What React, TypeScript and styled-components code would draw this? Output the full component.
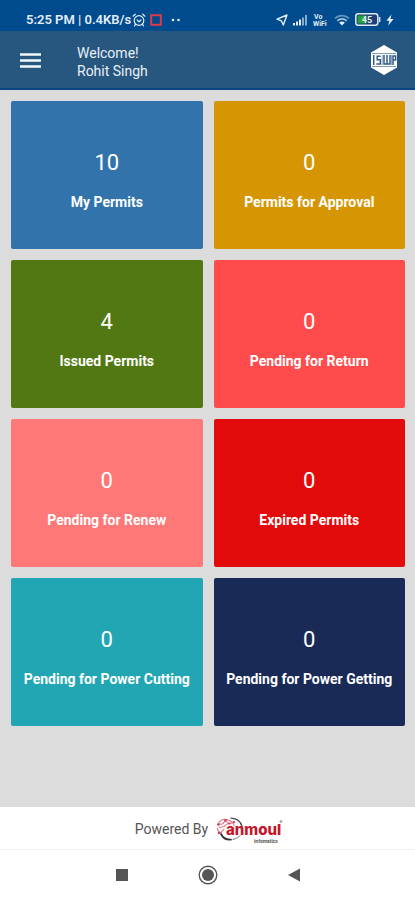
import React from "react";
import styled, { createGlobalStyle } from "styled-components";

const GlobalStyle = createGlobalStyle`
  *, *::before, *::after { box-sizing: border-box; }
  body {
    margin: 0;
    font-family: Roboto, "Liberation Sans", sans-serif;
    background: #dcdcdc;
  }
  svg { display: block; flex: none; }
`;

const Screen = styled.div`
  display: flex;
  flex-direction: column;
  min-height: 100vh;
`;

const StatusBar = styled.div`
  display: flex;
  align-items: center;
  justify-content: space-between;
  height: 31px;
  padding: 8px 21px 0 26px;
  background: #004b8d;
  color: #e3edf8;
`;

const StatusGroup = styled.div<{ $gap: number }>`
  display: flex;
  align-items: center;
  gap: ${({ $gap }) => $gap}px;
`;

const StatusText = styled.span`
  font-size: 13px;
  font-weight: 600;
  line-height: 16px;
  white-space: nowrap;
`;

const Header = styled.header`
  display: flex;
  align-items: center;
  height: 59px;
  padding: 0 17px 0 18px;
  background: #27567f;
  border-bottom: 2px solid #0a4482;
  color: #e8f0f8;
`;

const MenuButton = styled.button`
  display: flex;
  padding: 0;
  border: 0;
  background: none;
  color: #f2f7fc;
  cursor: pointer;
`;

const Greeting = styled.div`
  flex: 1;
  margin-left: 35px;
  padding-top: 4px;
  font-size: 14px;
  line-height: 18px;
`;

const Main = styled.main`
  flex: 1;
  padding: 11px 10px 11px 11px;
`;

const CardGrid = styled.div`
  display: grid;
  grid-template-columns: repeat(2, minmax(0, 1fr));
  grid-auto-rows: 148px;
  gap: 11px;
`;

const Card = styled.button<{ $color: string }>`
  display: flex;
  flex-direction: column;
  align-items: center;
  justify-content: center;
  gap: 16px;
  padding: 12px 4px 0;
  border: 0;
  border-radius: 2px;
  background: ${({ $color }) => $color};
  color: #fff;
  font-family: inherit;
  cursor: pointer;
`;

const Count = styled.span`
  font-size: 22px;
  line-height: 26px;
`;

const CardLabel = styled.span`
  font-size: 14px;
  font-weight: 700;
  line-height: 20px;
`;

const Footer = styled.footer`
  display: flex;
  align-items: center;
  justify-content: center;
  gap: 8px;
  height: 43px;
  padding: 2px 0 0 3px;
  border-bottom: 1px solid #f3f3f3;
  background: #fff;
  color: #555;
  font-size: 14px;
`;

const NavBar = styled.nav`
  display: flex;
  align-items: center;
  justify-content: center;
  gap: 70px;
  height: 50px;
  background: #fff;
  color: #555;
`;

const NavButton = styled.button`
  display: flex;
  padding: 0;
  border: 0;
  background: none;
  color: inherit;
  cursor: pointer;
`;

const cards = [
  { label: "My Permits", count: 10, color: "#3273ab" },
  { label: "Permits for Approval", count: 0, color: "#d69604" },
  { label: "Issued Permits", count: 4, color: "#517812" },
  { label: "Pending for Return", count: 0, color: "#ff4b4b" },
  { label: "Pending for Renew", count: 0, color: "#ff7878" },
  { label: "Expired Permits", count: 0, color: "#e20a0a" },
  { label: "Pending for Power Cutting", count: 0, color: "#23a6b3" },
  { label: "Pending for Power Getting", count: 0, color: "#1a2a56" },
];

const AlarmIcon = () => (
  <svg width="14" height="14" viewBox="0 0 14 14" fill="none" stroke="currentColor" strokeWidth="1.2" strokeLinecap="round">
    <circle cx="7" cy="7.5" r="4.8" />
    <path d="M1 3.2 3.3 1.2M13 3.2 10.7 1.2M5.2 7l1.8 1.8L9 7M3.6 11.2 2.5 12.8M10.4 11.2l1.1 1.6" />
  </svg>
);

const RecordIcon = () => (
  <svg width="18" height="12" viewBox="0 0 18 12" fill="none" stroke="#dc3a48">
    <rect x="4.2" y="1.2" width="9.6" height="9.6" strokeWidth="2" />
  </svg>
);

const DotsIcon = () => (
  <svg width="16" height="4" viewBox="0 0 16 4" fill="currentColor">
    <circle cx="7" cy="2" r="1.3" />
    <circle cx="12.5" cy="2" r="1.3" />
  </svg>
);

const LocationIcon = () => (
  <svg width="12" height="12" viewBox="0 0 12 12" fill="none" stroke="currentColor" strokeWidth="1.4" strokeLinejoin="round">
    <path d="M11 1 7.3 11 5.4 6.8 1 5.2Z" />
  </svg>
);

const SignalIcon = () => (
  <svg width="15" height="12" viewBox="0 0 15 12" fill="currentColor">
    <path d="M0 9h2v2.5H0zM3 7.5h2v4H3zM6 5.5h2v6H6z" />
    <path d="M9 3.5h2v8H9zM12 1h2v10.5h-2z" opacity=".6" />
  </svg>
);

const VoWifiIcon = () => (
  <svg width="16" height="14" viewBox="0 0 16 14" fill="currentColor" fontFamily="Roboto, sans-serif" fontWeight="700" fontSize="7">
    <text x="1" y="6">Vo</text>
    <text x="0" y="13">WiFi</text>
  </svg>
);

const WifiIcon = () => (
  <svg width="16" height="12" viewBox="0 0 16 12" fill="none" stroke="currentColor" strokeWidth="1.7">
    <path d="M1 4.4a10 10 0 0 1 14 0" opacity=".45" />
    <path d="M3.3 6.9a6.6 6.6 0 0 1 9.4 0" opacity=".7" />
    <path d="M8 11.6 5.2 8.8a4 4 0 0 1 5.6 0Z" fill="currentColor" stroke="none" />
  </svg>
);

const BatteryIcon = () => (
  <svg width="26" height="13" viewBox="0 0 26 13">
    <rect x=".8" y=".8" width="22" height="11.4" rx="2.5" fill="#1d3f79" stroke="#dfe9f4" strokeWidth="1.5" />
    <rect x="2.5" y="2.5" width="9" height="8" fill="#22a03c" />
    <path d="M24 4h1.4v5H24z" fill="#dfe9f4" />
    <text x="12" y="10" textAnchor="middle" fontFamily="Roboto, sans-serif" fontSize="9" fontWeight="700" fill="#e6f2ee">45</text>
  </svg>
);

const BoltIcon = () => (
  <svg width="8" height="12" viewBox="0 0 8 12" fill="currentColor">
    <path d="M5.4.5.4 6.8h2.9L2.2 11.5 7.6 5H4.5Z" />
  </svg>
);

const MenuIcon = () => (
  <svg width="24" height="24" viewBox="0 0 24 24" stroke="currentColor" strokeWidth="2.4">
    <path d="M2 6.5h21M2 12.5h21M2 18.5h21" />
  </svg>
);

const IswpLogo = () => (
  <svg width="28" height="32" viewBox="0 0 28 32" role="img" aria-label="ISWP">
    <path d="M14 1 27 8.5v15L14 31 1 23.5v-15Z" fill="#fff" />
    <path d="M2 9.5h24M2 22.5h24" stroke="#7d9ab6" strokeWidth="1" />
    <g fill="none" stroke="#2f5d88" strokeWidth="1.5">
      <path d="M3.7 11v10M10.6 12.2H7.2v3.5h3.2v4.4H6.3M14 11v9h3v-9M17 20h3v-9M23 21V12h2.6v4H23" />
    </g>
    <path d="M12.2 11v10M21.5 11v10" stroke="#91a9c1" strokeWidth="1" />
  </svg>
);

const AnmoulLogo = () => (
  <svg width="67" height="30" viewBox="0 0 67 30" role="img" aria-label="anmoul infomatics">
    <g fill="none" strokeLinecap="round">
      <path d="M15 4.2C21 4.7 25 8 26 12.5" stroke="#4a4a4a" strokeWidth="1.3" />
      <path d="M5 20c2 4.2 5.5 6 10 5.6" stroke="#333" strokeWidth="1.8" />
      <path d="M17 25.4c3.6-.7 6-2.4 7.2-4" stroke="#777" strokeWidth="1" />
      <path d="M2 10.5C4 6 8 4.2 13 6.2c3 1.2 4.6 3.4 5 5.2M2 10.5l5-.8 2.6-3.2 3.2 3.6L18 8M3 13.5l5-1 3-2.4M1.5 14.5c0 2.4 1.6 3.6 3.5 4.2L8 15" stroke="#dd7182" strokeWidth="1.1" />
    </g>
    <g fill="#d33a50">
      <circle cx="2.4" cy="10.5" r="1.3" /><circle cx="9.5" cy="6.2" r="1.2" /><circle cx="13" cy="9.5" r="1" />
      <circle cx="3" cy="19" r="1.2" /><circle cx="18" cy="8" r="1.1" />
    </g>
    <text x="10" y="21" fontFamily="Inter, sans-serif" fontSize="15" fontWeight="800" fill="#c5162b">anmoul</text>
    <text x="38" y="29" fontFamily="Roboto, sans-serif" fontSize="5" fontWeight="700" fill="#555">infomatics</text>
    <circle cx="65" cy="7.5" r="1" fill="none" stroke="#666" strokeWidth=".7" />
  </svg>
);

const SquareIcon = () => (
  <svg width="12" height="12" viewBox="0 0 12 12"><rect width="12" height="12" fill="currentColor" /></svg>
);

const HomeIcon = () => (
  <svg width="20" height="20" viewBox="0 0 20 20">
    <circle cx="10" cy="10" r="8.8" fill="none" stroke="currentColor" strokeWidth="1.4" />
    <circle cx="10" cy="10" r="6" fill="currentColor" />
  </svg>
);

const BackIcon = () => (
  <svg width="12" height="14" viewBox="0 0 12 14"><path d="M12 .5v13L0 7Z" fill="currentColor" /></svg>
);

export default function App() {
  return (
    <>
      <GlobalStyle />
      <Screen>
        <StatusBar>
          <StatusGroup $gap={1}>
            <StatusText>5:25 PM | 0.4KB/s</StatusText>
            <AlarmIcon />
            <RecordIcon />
            <DotsIcon />
          </StatusGroup>
          <StatusGroup $gap={5}>
            <LocationIcon />
            <SignalIcon />
            <VoWifiIcon />
            <WifiIcon />
            <BatteryIcon />
            <BoltIcon />
          </StatusGroup>
        </StatusBar>
        <Header>
          <MenuButton type="button" aria-label="Open menu"><MenuIcon /></MenuButton>
          <Greeting>
            <div>Welcome!</div>
            <div>Rohit Singh</div>
          </Greeting>
          <IswpLogo />
        </Header>
        <Main>
          <CardGrid>
            {cards.map(({ label, count, color }) => (
              <Card key={label} type="button" $color={color}>
                <Count>{count}</Count>
                <CardLabel>{label}</CardLabel>
              </Card>
            ))}
          </CardGrid>
        </Main>
        <Footer>
          <span>Powered By</span>
          <AnmoulLogo />
        </Footer>
        <NavBar aria-label="System navigation">
          <NavButton type="button" aria-label="Recent apps"><SquareIcon /></NavButton>
          <NavButton type="button" aria-label="Home"><HomeIcon /></NavButton>
          <NavButton type="button" aria-label="Back"><BackIcon /></NavButton>
        </NavBar>
      </Screen>
    </>
  );
}
